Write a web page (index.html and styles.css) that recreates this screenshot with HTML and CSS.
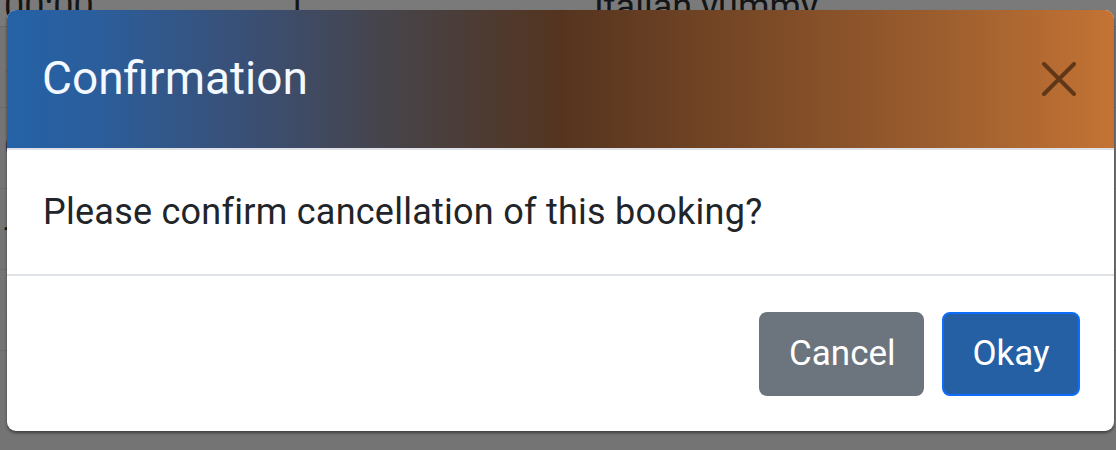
FILE: index.html
```html
<!DOCTYPE html>
<html lang="en">
<head>
<meta charset="utf-8">
<title>Confirmation</title>
<link rel="stylesheet" href="styles.css">
</head>
<body>
<div class="page">
  <div class="row first">
    <span class="cell c1">00:00</span>
    <span class="cell c2">1</span>
    <span class="cell c3">Italian yummy</span>
  </div>
  <div class="row">
    <span class="cell c1">5:00</span>
    <span class="cell c2">2</span>
    <span class="cell c3">Sushi house</span>
  </div>
  <div class="row">
    <span class="cell c1 link">Cancel</span>
    <span class="cell c2">3</span>
    <span class="cell c3">Burger bar</span>
  </div>
  <div class="row">
    <span class="cell c1">-</span>
    <span class="cell c2">4</span>
    <span class="cell c3">Taco place</span>
  </div>
  <div class="row">
    <span class="cell c1 link">5:30</span>
    <span class="cell c2">5</span>
    <span class="cell c3">Pizza corner</span>
  </div>
</div>

<div class="modal" role="dialog" aria-labelledby="modal-title">
  <div class="modal-header">
    <h5 class="modal-title" id="modal-title">Confirmation</h5>
    <button class="btn-close" type="button" aria-label="Close">
      <svg viewBox="0 0 36 34" width="36" height="34" aria-hidden="true">
        <path d="M3 2 L33 32 M33 2 L3 32" stroke="currentColor" stroke-width="4" stroke-linecap="round" fill="none"/>
      </svg>
    </button>
  </div>
  <div class="modal-body">
    <p class="message">Please confirm cancellation of this booking?</p>
  </div>
  <div class="modal-footer">
    <button class="btn btn-secondary" type="button">Cancel</button>
    <button class="btn btn-primary" type="button">Okay</button>
  </div>
</div>
</body>
</html>
```

FILE: styles.css
```css
html, body {
  margin: 0;
  padding: 0;
}

body {
  width: 1116px;
  height: 450px;
  overflow: hidden;
  background: #747474;
  font-family: Roboto, "Liberation Sans", sans-serif;
  position: relative;
}

.page {
  display: flex;
  flex-direction: column;
  margin-top: -14px;
}

.row {
  display: flex;
  height: 80px;
  align-items: center;
  border-bottom: 1px solid #6a6a6a;
}

.row.first {
  height: 40px;
  align-items: flex-start;
  background: #7a7a7a;
}

.cell {
  font-size: 36px;
  color: #151515;
  line-height: 1.2;
}

.c1 {
  width: 282px;
  padding-left: 4px;
}

.c2 {
  width: 308px;
}

.c3 {
  flex: 1;
}

.link {
  color: #12305a;
}

.modal {
  position: absolute;
  left: 7px;
  top: 10px;
  width: 1107px;
  background: #fff;
  border-radius: 9px;
  overflow: hidden;
  box-shadow: 0 2px 3px rgba(0, 0, 0, 0.45);
}

.modal-header {
  height: 140px;
  box-sizing: border-box;
  display: flex;
  align-items: center;
  justify-content: space-between;
  padding: 0 35px 0 35px;
  border-bottom: 2px solid #dee2e6;
  background: linear-gradient(to right,
    #2462a7 0%,
    #2b5e9c 8%,
    #3a4f74 22%,
    #474348 35%,
    #4e3a30 44%,
    #55341f 50%,
    #6a4023 60%,
    #834e28 72%,
    #a0602f 86%,
    #c47334 100%);
}

.modal-title {
  margin: 0;
  font-size: 46px;
  font-weight: 400;
  color: #f4f8ff;
  line-height: 1;
  padding-bottom: 2px;
}

.btn-close {
  width: 40px;
  height: 40px;
  padding: 0;
  margin: 0;
  border: none;
  background: none;
  color: #613817;
  display: flex;
  align-items: center;
  justify-content: center;
}

.modal-body {
  height: 126px;
  box-sizing: border-box;
  display: flex;
  align-items: center;
  padding-left: 36px;
  border-bottom: 2px solid #dee2e6;
}

.message {
  margin: 0;
  font-size: 36px;
  letter-spacing: 0.25px;
  color: #212529;
  line-height: 1;
}

.modal-footer {
  height: 155px;
  box-sizing: border-box;
  display: flex;
  align-items: center;
  justify-content: flex-end;
  gap: 18px;
  padding-right: 34px;
}

.btn {
  height: 84px;
  box-sizing: border-box;
  border-radius: 8px;
  font-family: Roboto, "Liberation Sans", sans-serif;
  font-size: 35px;
  color: #fff;
  padding: 0 28px;
  line-height: 1;
}

.btn-secondary {
  width: 165px;
  background: #6c757d;
  border: 2px solid #6c757d;
}

.btn-primary {
  width: 138px;
  background: #2660a4;
  border: 2px solid #0d6efd;
}
```
